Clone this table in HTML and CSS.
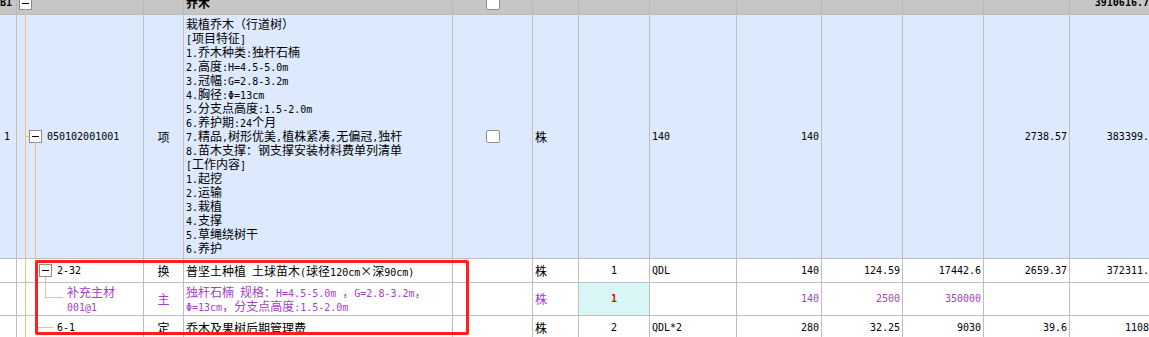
FILE: index.html
```html
<!DOCTYPE html>
<html lang="zh">
<head>
<meta charset="utf-8">
<title>清单</title>
<link rel="stylesheet" href="styles.css">
</head>
<body>
<div class="sheet">
  <div class="grid">
    <div class="row head">
      <div class="c n b num0">B1</div>
      <div class="c code0"><span class="tog"></span></div>
      <div class="c"></div>
      <div class="c b">乔木</div>
      <div class="c mid"><span class="cb"></span></div>
      <div class="c"></div>
      <div class="c"></div>
      <div class="c"></div>
      <div class="c"></div>
      <div class="c"></div>
      <div class="c"></div>
      <div class="c"></div>
      <div class="c n b r">3910616.72</div>
    </div>

    <div class="row item">
      <div class="c n num">1</div>
      <div class="c code1"><span class="tog"></span><span class="n">050102001001</span></div>
      <div class="c mid">项</div>
      <div class="c desc"><div class="t">
        <div class="ln">栽植乔木（行道树）</div>
        <div class="ln"><span class="n">[</span>项目特征<span class="n">]</span></div>
        <div class="ln"><span class="n">1.</span>乔木种类<span class="n">:</span>独杆石楠</div>
        <div class="ln"><span class="n">2.</span>高度<span class="n">:H=4.5-5.0m</span></div>
        <div class="ln"><span class="n">3.</span>冠幅<span class="n">:G=2.8-3.2m</span></div>
        <div class="ln"><span class="n">4.</span>胸径<span class="n">:Φ=13cm</span></div>
        <div class="ln"><span class="n">5.</span>分支点高度<span class="n">:1.5-2.0m</span></div>
        <div class="ln"><span class="n">6.</span>养护期<span class="n">:24</span>个月</div>
        <div class="ln"><span class="n">7.</span>精品<span class="n">,</span>树形优美<span class="n">,</span>植株紧凑<span class="n">,</span>无偏冠<span class="n">,</span>独杆</div>
        <div class="ln"><span class="n">8.</span>苗木支撑：钢支撑安装材料费单列清单</div>
        <div class="ln"><span class="n">[</span>工作内容<span class="n">]</span></div>
        <div class="ln"><span class="n">1.</span>起挖</div>
        <div class="ln"><span class="n">2.</span>运输</div>
        <div class="ln"><span class="n">3.</span>栽植</div>
        <div class="ln"><span class="n">4.</span>支撑</div>
        <div class="ln"><span class="n">5.</span>草绳绕树干</div>
        <div class="ln"><span class="n">6.</span>养护</div>
      </div></div>
      <div class="c mid"><span class="cb"></span></div>
      <div class="c">株</div>
      <div class="c"></div>
      <div class="c n">140</div>
      <div class="c n r">140</div>
      <div class="c"></div>
      <div class="c"></div>
      <div class="c n r">2738.57</div>
      <div class="c n r">383399.8</div>
    </div>

    <div class="row sub">
      <div class="c"></div>
      <div class="c code2"><span class="tog"></span><span class="n">2-32</span></div>
      <div class="c mid">换</div>
      <div class="c"><div class="t"><div class="ln">普坚土种植<span class="n"> </span>土球苗木<span class="n">(</span>球径<span class="n">120cm</span>×深<span class="n">90cm)</span></div></div></div>
      <div class="c"></div>
      <div class="c">株</div>
      <div class="c n mid">1</div>
      <div class="c n">QDL</div>
      <div class="c n r">140</div>
      <div class="c n r">124.59</div>
      <div class="c n r">17442.6</div>
      <div class="c n r">2659.37</div>
      <div class="c n r">372311.8</div>
    </div>

    <div class="row sub mat">
      <div class="c"></div>
      <div class="c code3 p"><div class="t"><div class="ln">补充主材</div><div class="ln"><span class="n">001@1</span></div></div></div>
      <div class="c mid p">主</div>
      <div class="c p"><div class="t"><div class="ln">独杆石楠<span class="n"> </span>规格：<span class="n">H=4.5-5.0m </span>，<span class="n">G=2.8-3.2m</span>，</div><div class="ln"><span class="n">Φ=13cm</span>，分支点高度<span class="n">:1.5-2.0m</span></div></div></div>
      <div class="c"></div>
      <div class="c p">株</div>
      <div class="c n mid qty">1</div>
      <div class="c"></div>
      <div class="c n r p">140</div>
      <div class="c n r p">2500</div>
      <div class="c n r p">350000</div>
      <div class="c"></div>
      <div class="c"></div>
    </div>

    <div class="row sub">
      <div class="c"></div>
      <div class="c code4"><span class="n">6-1</span></div>
      <div class="c mid">定</div>
      <div class="c">乔木及果树后期管理费</div>
      <div class="c"></div>
      <div class="c">株</div>
      <div class="c n mid">2</div>
      <div class="c n">QDL*2</div>
      <div class="c n r">280</div>
      <div class="c n r">32.25</div>
      <div class="c n r">9030</div>
      <div class="c n r">39.6</div>
      <div class="c n r">11088</div>
    </div>
  </div>
</div>

<svg class="tree" width="80" height="337" viewBox="0 0 80 337" aria-hidden="true">
  <g fill="#f9bf78">
    <rect x="25" y="9" width="1" height="328"/>
    <rect x="26" y="136" width="3" height="1"/>
    <rect x="35" y="142" width="1" height="186"/>
    <rect x="36" y="270" width="3" height="1"/>
    <rect x="45" y="277" width="1" height="21"/>
    <rect x="45" y="297" width="18" height="1"/>
    <rect x="35" y="327" width="18" height="1"/>
  </g>
</svg>
<div class="mark"></div>
</body>
</html>
```

FILE: styles.css
```css
html, body {
  margin: 0;
  padding: 0;
  background: #ffffff;
  overflow: hidden;
}

body {
  width: 1149px;
  height: 337px;
  font-family: "Noto Sans CJK SC", "Noto Sans", sans-serif;
  font-size: 12px;
  line-height: 14px;
  color: #000000;
}

.sheet {
  margin-top: -8px;
}

.grid {
  display: grid;
  grid-template-columns: 17px 127px 40px 269px 80px 46px 71px 87px 85px 81px 81px 86px 88px;
  grid-template-rows: 23px 244px 24px 33px 24px;
  width: 1157px;
}

.row {
  display: contents;
}

.c {
  box-sizing: border-box;
  border-right: 1px solid #bfbfbf;
  border-bottom: 1px solid #bfbfbf;
  display: flex;
  align-items: center;
  padding: 0 2px;
  overflow: hidden;
  white-space: nowrap;
  min-width: 0;
}

.t {
  display: block;
}

.ln {
  height: 14px;
  line-height: 14px;
  white-space: pre;
  overflow: visible;
}

.ln .n {
  line-height: 0;
}

.head .c {
  background: #c6c6c6;
  border-color: #bababa;
}

.item .c {
  background: #dde9fc;
}

.sub .c {
  background: #ffffff;
}

.n {
  font-family: "DejaVu Sans Mono", "Liberation Mono", monospace;
  font-size: 10px;
  line-height: 14px;
}

.b {
  font-weight: bold;
}

.r {
  justify-content: flex-end;
}

.mid {
  justify-content: center;
}

.p {
  color: #a43fc8;
}

.num0 {
  padding-left: 0;
}

.num {
  padding-left: 4px;
}

.desc {
  align-items: flex-start;
  padding-top: 2px;
}

.code0 {
  padding-left: 2px;
}

.code1 {
  padding-left: 12px;
  gap: 5px;
}

.code2 {
  padding-left: 22px;
  gap: 5px;
}

.code3 {
  padding-left: 50px;
}

.code4 {
  padding-left: 40px;
}

.tog {
  position: relative;
  flex: none;
  box-sizing: border-box;
  width: 13px;
  height: 13px;
  border: 1px solid #8c8c8c;
  background: #ffffff;
}

.tog::after {
  content: "";
  position: absolute;
  left: 2px;
  top: 5px;
  width: 7px;
  height: 1px;
  background: #000000;
}

.cb {
  flex: none;
  box-sizing: border-box;
  width: 14px;
  height: 13px;
  border: 1px solid #8f8f8f;
  border-radius: 2px;
  background: #ffffff;
}

.sub .qty {
  background: #d8f6f6;
  color: #ee0000;
  font-weight: bold;
}

.tree {
  position: absolute;
  left: 0;
  top: 0;
  pointer-events: none;
}

.mark {
  position: absolute;
  left: 35px;
  top: 260px;
  width: 434px;
  height: 75px;
  box-sizing: border-box;
  border: 3px solid #ff1f1f;
  border-radius: 2px;
  pointer-events: none;
}
```
